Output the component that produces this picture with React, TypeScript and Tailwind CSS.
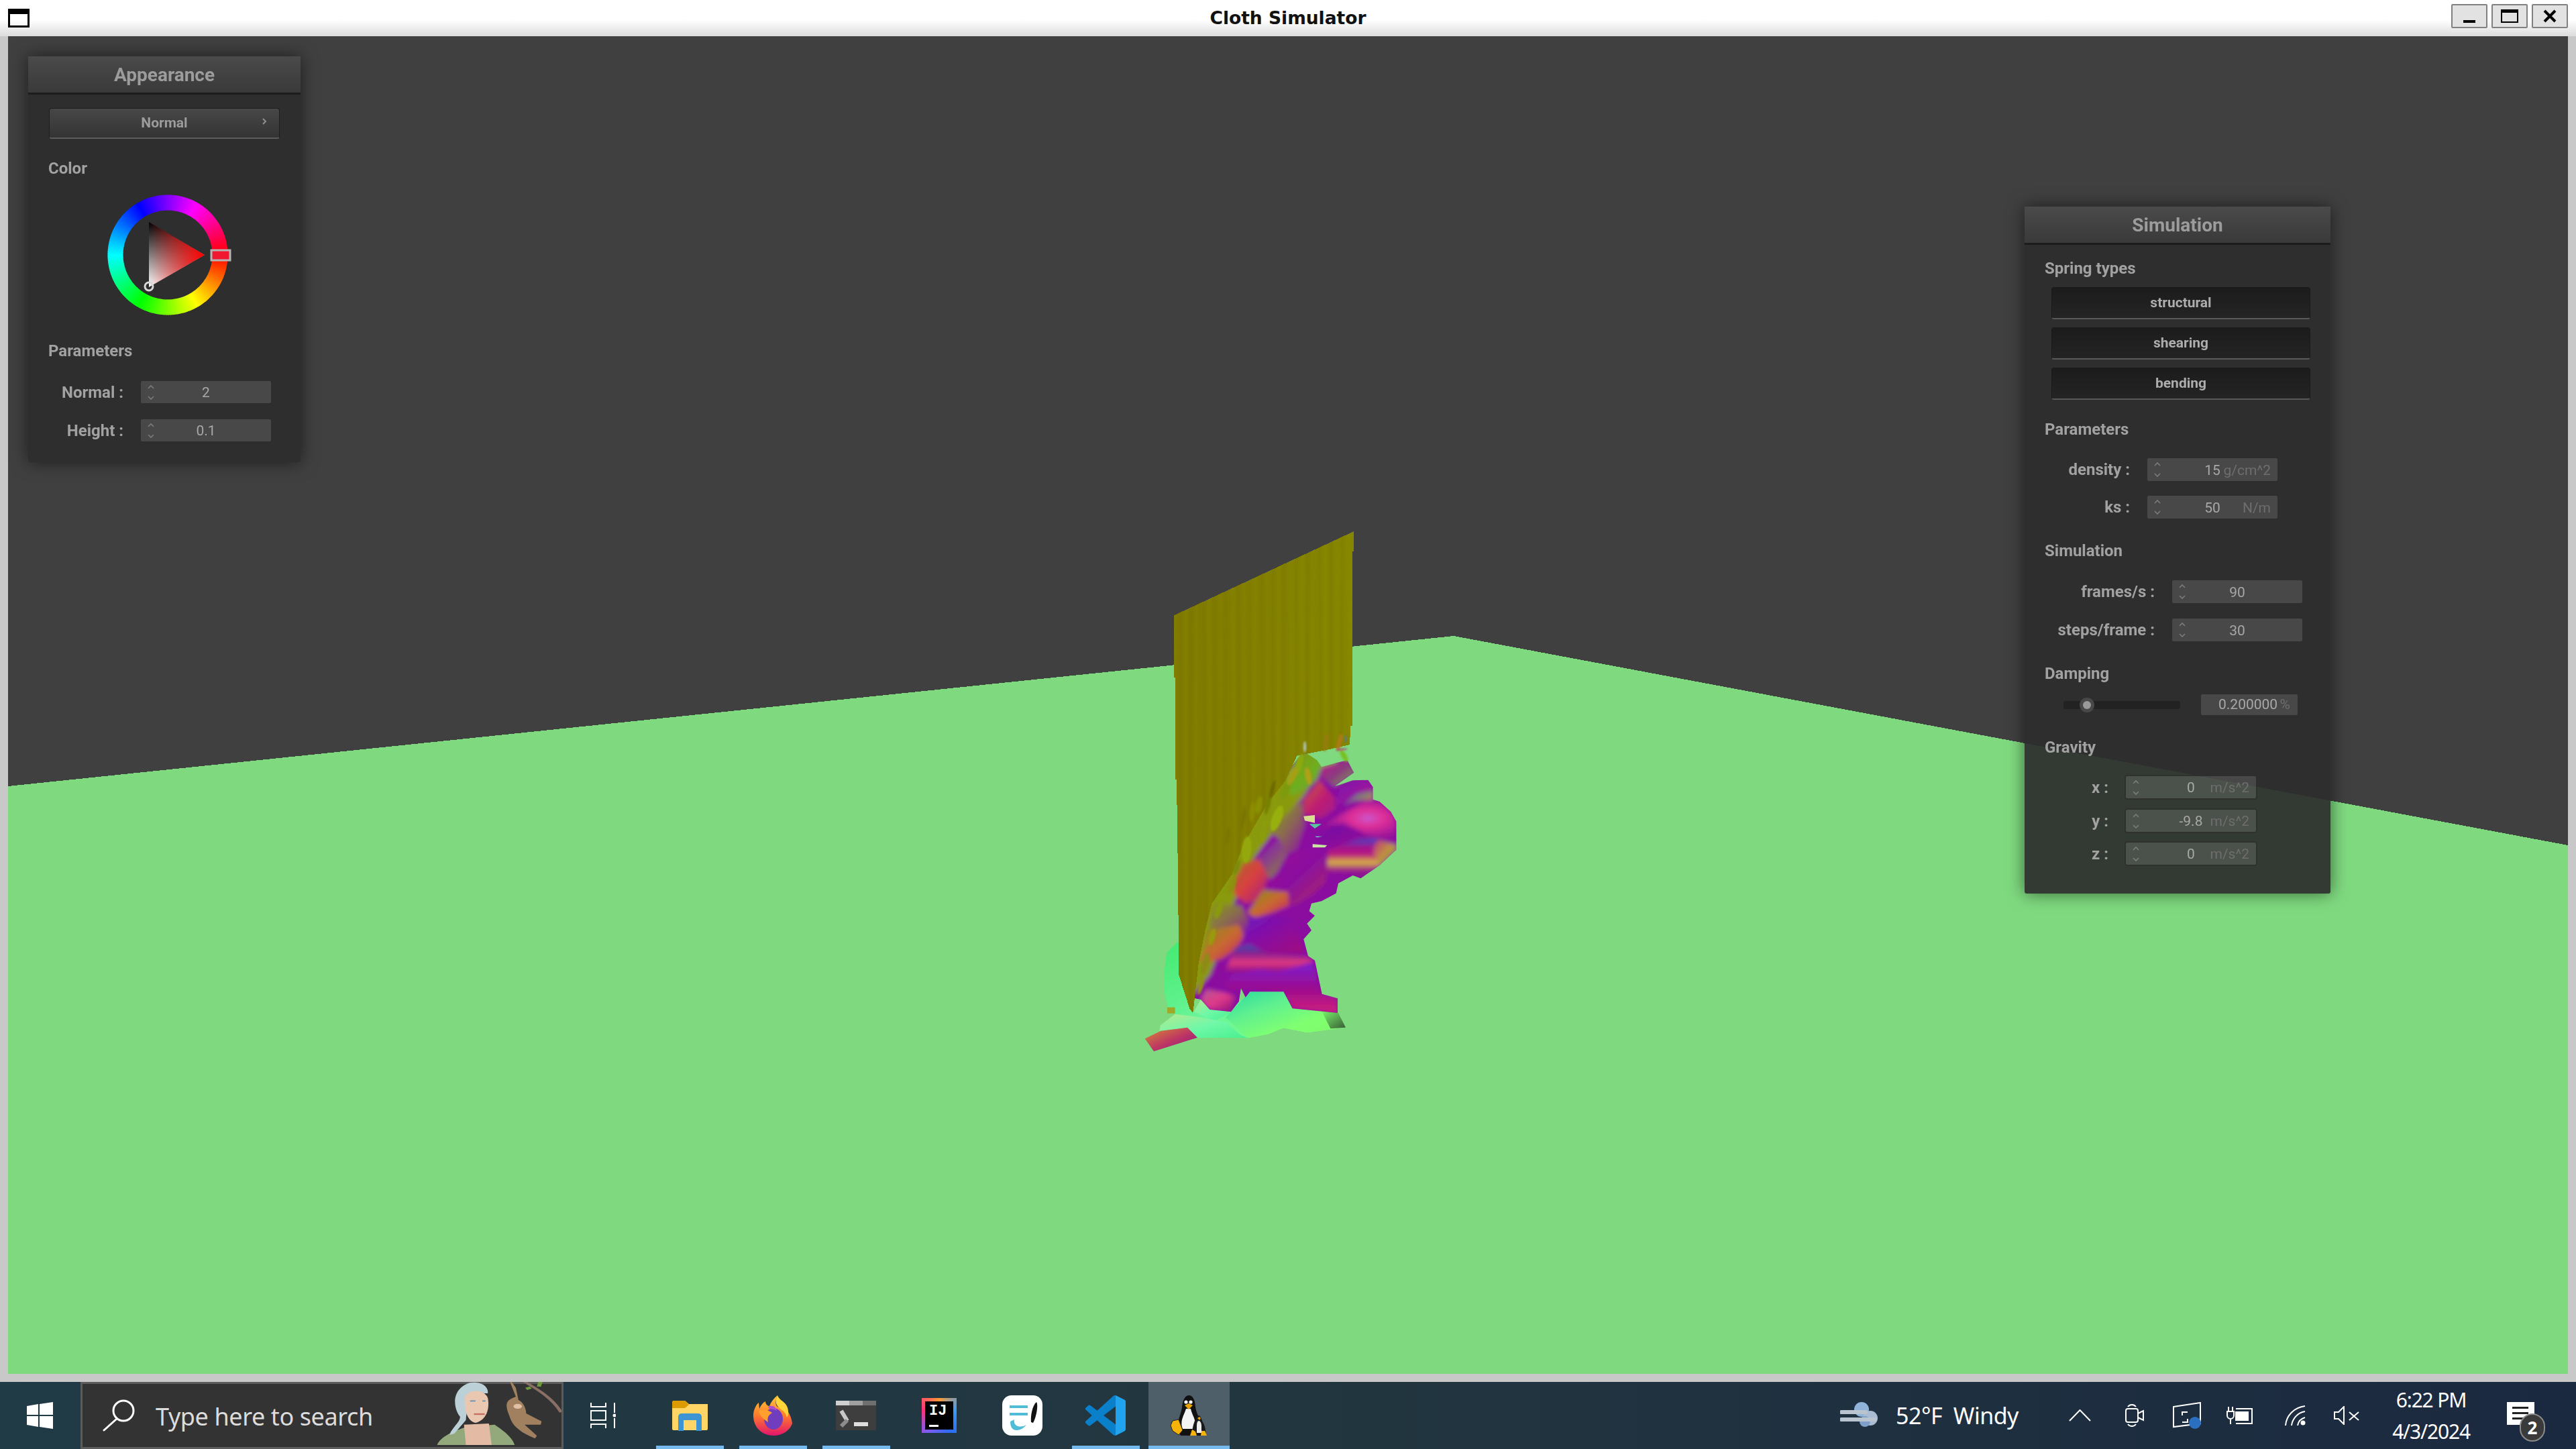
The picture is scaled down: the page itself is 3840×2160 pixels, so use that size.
const segs = Array.from({ length: 180 }, (_, i) => i * 2)
const wallStripes = Array.from({ length: 31 }, (_, i) => i)

const patchGrads: Record<string, string[]> = {
  mintGreen: ['#3fe86a', '#6cf59a', '#7dff78'],
  skirt: ['#28d8a0', '#60f090', '#80ff70', '#7cf868'],
  mint: ['#b8e890', '#70f8a8', '#48f090'],
  darkEnd: ['#78f868', '#3a5a38'],
  tail: ['#d89030', '#c03a60', '#8c0c90'],
  orangeMag: ['#7f9018', '#c86a30', '#c8186f'],
  purpOlive: ['#7a28b8', '#8a3a90', '#8a8a30'],
  olivePurp: ['#88a010', '#8a6a50', '#8c10a8'],
  magenta: ['#a00c90', '#8a10a0', '#b02a60'],
  orangePink: ['#a86a28', '#d84040', '#a01a90'],
  blueBand: ['#3050b0', '#8a2090', '#e03a80', '#90108a'],
  lowerMag: ['#7c20d0', '#9a0c90', '#d0207c'],
  pinkBlock: ['#b05a98', '#e03a88', '#8c1080'],
  purple: ['#6c18c0', '#8a0ca0', '#a0107c'],
  deepPurple: ['#7008a8', '#a00c90'],
  stripes: ['#3848c8', '#a01890', '#b81880', '#d8b840', '#9a1890', '#80108c'],
  orangeOlive: ['#c03080', '#c09040', '#70a030'],
  violet: ['#7a10b0', '#b01890'],
  blueOrange: ['#3060c0', '#d89030'],
  redWedge: ['#c86830', '#c02070', '#a01890'],
  oliveGreen: ['#8a9010', '#6cb020', '#a07820'],
  magGreen: ['#c0188a', '#8a3a80', '#80c030'],
  streak: ['#a06a18', '#d08030', '#8aa028'],
}

const patches: [string, string][] = [
  ['1000,-30 1030,-80 1085,-10 1085,25 1040,35 1000,10', 'streak'],
  ['850,25 880,0 1000,0 1030,50 960,70 940,125 880,180 820,200 800,130', 'oliveGreen'],
  ['960,70 1030,50 1075,40 1110,95 1020,155 960,120', 'magGreen'],
  ['880,220 950,130 1020,210 1020,260 960,300 880,280', 'redWedge'],
  ['1020,250 1040,170 1100,130 1168,128 1190,160 1190,180 1100,190', 'violet'],
  ['1060,240 1120,190 1190,175 1190,215 1100,220', 'blueOrange'],
  ['730,340 810,275 870,225 885,330 850,440 800,460 770,390 740,370', 'olivePurp'],
  ['610,500 680,480 770,390 805,460 760,540 730,570 720,560', 'purpOlive'],
  ['560,590 610,500 680,480 720,560 690,670 620,680 570,640', 'orangePink'],
  ['800,490 850,450 985,430 990,520 975,590 920,640 840,690 800,680 820,640 710,640 725,570 805,545', 'magenta'],
  ['630,720 700,620 810,630 815,690 740,720 660,745', 'orangeMag'],
  ['465,790 460,760 480,680 600,690 635,760 610,830 450,830', 'olivePurp'],
  ['440,870 450,800 590,775 615,830 570,890 510,930 415,945', 'orangeMag'],
  ['620,800 640,740 815,745 860,820 880,900 720,905 640,865 600,850', 'purple'],
  ['530,985 570,880 640,865 720,905 900,920 925,940 770,985', 'blueBand'],
  ['520,1040 560,1000 680,975 760,985 920,945 945,1040 960,1085 1032,1105 1032,1170 830,1150 790,1075 640,1060 600,1060 560,1070', 'lowerMag'],
  ['420,1110 445,1065 530,1080 570,1095 555,1165 460,1155', 'pinkBlock'],
  ['960,340 1000,310 1150,225 1220,225 1270,270 1295,320 1280,390 1170,375 1060,320', 'redWedge'],
  ['930,390 1020,330 1170,375 1285,395 1120,395 990,430', 'deepPurple'],
  ['990,440 1120,395 1200,390 1295,415 1295,440 1220,510 1135,568 1100,550 985,540', 'stripes'],
  ['1195,420 1215,395 1295,420 1295,440 1222,510 1195,460', 'orangeOlive'],
]

// creases where the flat part of the cloth starts to crumple: u, v, rx, ry, rotation, colour
const wrinkles: [number, number, number, number, number, string][] = [
  [625, 440, 22, 60, 5, '#94a808'],
  [650, 270, 12, 45, 5, '#8c8c00'],
  [700, 360, 14, 50, 10, '#8a9c08'],
  [760, 300, 22, 60, 20, '#98b010'],
  [800, 170, 16, 50, 20, '#7e9a10'],
  [860, 60, 14, 50, 15, '#8caa10'],
  [830, 110, 16, 45, 25, '#a4a018'],
  [900, 110, 14, 40, -10, '#b0a018'],
  [560, 600, 14, 40, 20, '#8c9010'],
  [500, 710, 14, 40, 20, '#8a9a10'],
  [470, 830, 14, 40, 15, '#9a9a10'],
  [440, 950, 15, 50, 15, '#8c8c18'],
  [420, 1050, 10, 40, 15, '#909018'],
  [580, 520, 12, 35, 20, '#7e8a08'],
  [680, 240, 14, 40, 10, '#8b9000'],
  [720, 240, 10, 45, 15, '#768000'],
  [740, 170, 8, 40, 15, '#6c6800'],
  [610, 300, 8, 50, 10, '#787400'],
  [540, 380, 8, 40, 10, '#7a7600'],
  [1040, -40, 10, 40, 15, '#b07818'],
  [980, -40, 10, 40, 10, '#947c10'],
  [1060, 20, 12, 30, -30, '#78c020'],
  [885, -20, 6, 25, 0, '#b0c8c0'],
  [1068, -55, 4, 16, 0, '#5078a0'],
  [1050, -8, 26, 4, -5, '#b83078'],
]

const massPoints =
  '600,1060 620,1100 640,1075 790,1075 830,1150 1032,1170 1032,1105 962,1085 930,935 900,915 880,840 915,800 895,770 930,735 905,715 915,680 960,670 1025,635 1035,590 1100,555 1135,568 1220,510 1295,440 1295,315 1270,270 1220,225 1190,215 1190,160 1168,128 1100,130 1040,150 1020,155 1105,95 1075,40 1030,50 960,70 940,40 880,0 800,100 700,200 560,400 470,600 400,800 370,1100 420,1110 460,1155 555,1165 590,1120'

const wallPoints =
  '300,-608 1103,-983 1103,-895 1098,-895 1098,-115 1090,-115 1086,-30 1000,-10 850,20 800,130 720,230 610,420 560,550 470,680 440,800 410,950 385,1170 370,1150 322,1000 318,560 312,125 306,125 306,-330 300,-330'

const Scene = () => (
  <svg className="absolute inset-0 h-full w-full" viewBox="12 54 3816 1994" preserveAspectRatio="none">
    <defs>
      {Object.entries(patchGrads).map(([id, stops]) => (
        <linearGradient key={id} id={id} x1="0" y1="0" x2={id === 'blueBand' || id === 'stripes' || id === 'lowerMag' ? '0' : '1'} y2="1">
          {stops.map((c, i) => (
            <stop key={i} offset={i / (stops.length - 1)} stopColor={c} />
          ))}
        </linearGradient>
      ))}
      <linearGradient id="wall" x1="0" y1="0" x2="1" y2="0">
        <stop offset="0" stopColor="#7f7a00" />
        <stop offset="0.5" stopColor="#827f00" />
        <stop offset="1" stopColor="#868600" />
      </linearGradient>
      <radialGradient id="blob" cx="0.62" cy="0.45" r="0.6">
        <stop offset="0" stopColor="#c858d0" />
        <stop offset="0.35" stopColor="#e03098" />
        <stop offset="1" stopColor="#90109a" />
      </radialGradient>
      <clipPath id="massClip">
        <polygon points={massPoints} />
      </clipPath>
      <clipPath id="wallClip">
        <polygon points={wallPoints} />
      </clipPath>
      <filter id="soft" x="-5%" y="-5%" width="110%" height="110%">
        <feGaussianBlur stdDeviation="9" />
      </filter>
      <filter id="softer" x="-40%" y="-40%" width="180%" height="180%">
        <feGaussianBlur stdDeviation="5" />
      </filter>
      <filter id="streaks" x="-5%" y="-5%" width="110%" height="110%">
        <feGaussianBlur stdDeviation="4" />
      </filter>
    </defs>
    <polygon points="12,1172 2167,948 3828,1260 3828,2048 12,2048" fill="#7fda7f" shapeRendering="crispEdges" />
    <g transform="translate(1650 1120) scale(0.33333)">
      <polygon
        points="318,850 268,900 255,1000 258,1080 272,1140 305,1175 305,1205 240,1225 235,1250 170,1285 210,1342 405,1280 630,1282 720,1265 790,1237 895,1258 1068,1235 1035,1170 830,1150 790,1078 640,1075 540,1170 420,1110 390,1160"
        fill="url(#mintGreen)"
        shapeRendering="crispEdges"
      />
      <polygon points="270,1145 305,1145 305,1172 270,1172" fill="#a0a828" />
      <polygon points="420,1110 390,1165 480,1205 550,1170" fill="url(#mint)" />
      <polygon points="305,1175 420,1190 530,1210 600,1270 630,1282 405,1280 235,1250 240,1225" fill="url(#mint)" />
      <polygon points="640,1075 790,1075 830,1150 1035,1170 1068,1235 895,1258 790,1237 720,1265 630,1282 530,1190 620,1095" fill="url(#skirt)" />
      <polygon points="960,1160 1035,1170 1068,1235 1000,1240" fill="url(#darkEnd)" />
      <polygon points="170,1285 240,1250 360,1235 405,1280 210,1342" fill="url(#tail)" />
      <g clipPath="url(#massClip)">
        <g filter="url(#soft)">
          <polygon points="350,0 1350,0 1350,1200 350,1200" fill="#8a0ca0" />
          <polygon points="880,0 800,100 700,200 560,400 470,600 400,800 370,1100 460,1000 520,850 560,700 640,500 760,340 880,200 960,70" fill="#8a9a10" />
          {patches.map(([p, g], i) => (
            <polygon key={i} points={p} fill={`url(#${g})`} />
          ))}
          <polygon points="960,340 1000,310 1150,225 1220,225 1270,270 1295,320 1280,390 1170,375 1060,320" fill="url(#blob)" />
        </g>
      </g>
      <polygon points="880,290 930,285 930,320 885,310" fill="#d8e090" />
      <polygon points="905,325 960,325 930,345" fill="#58c8a0" />
      <polygon points="930,380 965,380 940,385" fill="#70e8d0" />
      <polygon points="920,415 985,420 975,430 920,430" fill="#c8e8a0" />
      <polygon points={wallPoints} fill="url(#wall)" shapeRendering="crispEdges" />
      <g clipPath="url(#wallClip)">
        <g filter="url(#streaks)">
          {wallStripes.map((i) => (
            <path
              key={i}
              d={`M${300 + i * 26} -1000L${318 + i * 26 - (i % 5) * 8} 1200`}
              stroke={i % 2 === 0 ? '#8c8a00' : '#767100'}
              strokeOpacity="0.3"
              strokeWidth={7 + (i % 4) * 3}
            />
          ))}
        </g>
      </g>
      <g filter="url(#softer)">
        {wrinkles.map(([u, v, rx, ry, rot, c], i) => (
          <ellipse key={i} cx={u} cy={v} rx={rx} ry={ry} fill={c} transform={`rotate(${rot} ${u} ${v})`} />
        ))}
      </g>
    </g>
  </svg>
)

const Spin = () => (
  <svg className="absolute left-[8px] top-1/2 -translate-y-1/2" width="14" height="26" viewBox="0 0 14 26" fill="none" stroke="#7c7c7c" strokeWidth="1.6">
    <path d="M3 7l4-4 4 4" />
    <path d="M3 19l4 4 4-4" />
  </svg>
)

const NumBox = ({ value, unit, h = 'h-[37px]' }: { value: string; unit?: string; h?: string }) => (
  <div className={`relative flex w-[198px] items-center justify-center rounded-[4px] border-2 border-[#232323]/70 bg-[#b0b0b0]/20 pt-[3px] text-[21px] font-normal text-[#a8a8a8] ${h}`}>
    <Spin />
    <span>{value}</span>
    {unit && <span className="absolute right-[10px] text-[#6e6e6e]">{unit}</span>}
  </div>
)

const Row = ({ label, labelW, value, unit, mt, h }: { label: string; labelW: string; value: string; unit?: string; mt: string; h?: string }) => (
  <div className={`flex items-center gap-[24px] ${mt}`}>
    <span className={`text-right ${labelW}`}>{label}</span>
    <NumBox value={value} unit={unit} h={h} />
  </div>
)

const SectionLabel = ({ children, mt }: { children: string; mt: string }) => (
  <div className={`h-[30px] pl-[30px] leading-[30px] ${mt}`}>{children}</div>
)

const Panel = ({ title, pos, children }: { title: string; pos: string; children: React.ReactNode }) => (
  <div className={`absolute rounded-[3px] bg-[#2d2d2d]/[0.93] font-['Roboto',sans-serif] text-[24px] font-bold text-[#a2a2a2] shadow-[0_0_26px_rgba(0,0,0,0.55)] blur-[0.5px] ${pos}`}>
    <div className="flex h-[57px] items-center justify-center border-b-[3px] border-[#1c1c1c] bg-gradient-to-b from-[#4a4a4a] to-[#3a3a3a] pt-[2px] text-[28px] text-[#9c9c9c]">
      {title}
    </div>
    {children}
  </div>
)

const SpringBtn = ({ label, mt }: { label: string; mt: string }) => (
  <div className={`ml-[40px] flex h-[48px] w-[386px] items-center justify-center rounded-[4px] border border-b-2 border-[#1a1a1a] border-b-[#5a5a5a] bg-gradient-to-b from-[#1c1c1c] to-[#242424] text-[21px] text-[#adadad] ${mt}`}>
    {label}
  </div>
)

const Wheel = () => (
  <svg className="ml-[113px] mt-[19px] block" width="190" height="190" viewBox="155 285 190 190">
    <defs>
      <linearGradient id="triV" x1="0" y1="0" x2="0" y2="1">
        <stop offset="0" stopColor="#000" />
        <stop offset="1" stopColor="#fff" />
      </linearGradient>
      <linearGradient id="triH" x1="0" y1="0" x2="1" y2="0">
        <stop offset="0" stopColor="#f00" stopOpacity="0" />
        <stop offset="1" stopColor="#f00" />
      </linearGradient>
    </defs>
    {segs.map((a) => {
      const r = 78
      const s = ((a - 1.4) * Math.PI) / 180
      const e = ((a + 1.4) * Math.PI) / 180
      return (
        <path
          key={a}
          d={`M${250 + r * Math.cos(s)} ${380 + r * Math.sin(s)}A${r} ${r} 0 0 1 ${250 + r * Math.cos(e)} ${380 + r * Math.sin(e)}`}
          stroke={`hsl(${a} 100% 50%)`}
          strokeWidth="23"
          fill="none"
        />
      )
    })}
    <polygon points="222,331 305,380 222,428" fill="url(#triV)" />
    <polygon points="222,331 305,380 222,428" fill="url(#triH)" />
    <circle cx="222" cy="427" r="6" fill="none" stroke="#d8d8d8" strokeWidth="3" />
    <rect x="315" y="373" width="28" height="15" fill="#f01830" stroke="#b4b4b4" strokeWidth="3" />
  </svg>
)

const Appearance = () => (
  <Panel title="Appearance" pos="left-[30px] top-[30px] h-[605px] w-[406px]">
    <div className="relative ml-[31px] mt-[20px] flex h-[46px] w-[344px] items-center justify-center rounded-[4px] border border-b-2 border-[#1e1e1e] border-b-[#5c5c5c] bg-gradient-to-b from-[#474747] to-[#343434] text-[21px] text-[#9c9c9c]">
      Normal
      <svg className="absolute right-[18px] top-[14px]" width="7" height="10" viewBox="0 0 7 10" fill="none" stroke="#909090" strokeWidth="2">
        <path d="M1 1l4 4-4 4" />
      </svg>
    </div>
    <SectionLabel mt="mt-[29px]">Color</SectionLabel>
    <Wheel />
    <SectionLabel mt="mt-[33px]">Parameters</SectionLabel>
    <Row label="Normal :" labelW="w-[142px]" value="2" mt="mt-[28px]" />
    <Row label="Height :" labelW="w-[142px]" value="0.1" mt="mt-[20px]" />
  </Panel>
)

const Simulation = () => (
  <Panel title="Simulation" pos="left-[3006px] top-[254px] h-[1024px] w-[456px]">
    <SectionLabel mt="mt-[20px]">Spring types</SectionLabel>
    <SpringBtn label="structural" mt="mt-[13px]" />
    <SpringBtn label="shearing" mt="mt-[12px]" />
    <SpringBtn label="bending" mt="mt-[12px]" />
    <SectionLabel mt="mt-[29px]">Parameters</SectionLabel>
    <Row label="density :" labelW="w-[157px]" value="15" unit="g/cm^2" mt="mt-[26px]" h="h-[38px]" />
    <Row label="ks :" labelW="w-[157px]" value="50" unit="N/m" mt="mt-[18px]" h="h-[38px]" />
    <SectionLabel mt="mt-[31px]">Simulation</SectionLabel>
    <Row label="frames/s :" labelW="w-[194px]" value="90" mt="mt-[27px]" h="h-[38px]" />
    <Row label="steps/frame :" labelW="w-[194px]" value="30" mt="mt-[19px]" h="h-[38px]" />
    <SectionLabel mt="mt-[31px]">Damping</SectionLabel>
    <div className="ml-[58px] mt-[14px] flex items-center">
      <div className="relative h-[12px] w-[174px] rounded-[3px] bg-[#222222]">
        <div className="absolute left-[24px] top-[-5px] flex h-[22px] w-[22px] items-center justify-center rounded-full bg-[#484848]">
          <div className="h-[12px] w-[12px] rounded-full bg-[#9a9a9a]" />
        </div>
      </div>
      <div className="relative ml-[29px] flex h-[35px] w-[148px] items-center rounded-[4px] border-2 border-[#232323]/70 bg-[#b0b0b0]/20 pl-[26px] text-[21px] font-normal text-[#a8a8a8]">
        0.200000
        <span className="absolute right-[11px] text-[#6e6e6e]">%</span>
      </div>
    </div>
    <SectionLabel mt="mt-[31px]">Gravity</SectionLabel>
    <Row label="x :" labelW="w-[125px]" value="0" unit="m/s^2" mt="mt-[26px]" />
    <Row label="y :" labelW="w-[125px]" value="-9.8" unit="m/s^2" mt="mt-[13px]" />
    <Row label="z :" labelW="w-[125px]" value="0" unit="m/s^2" mt="mt-[12px]" />
  </Panel>
)

const TitleBar = () => (
  <div className="grid h-[54px] grid-cols-[1fr_auto_1fr] items-center bg-[linear-gradient(#ffffff_55%,#dcdcdc)]">
    <div className="ml-[12px] h-[28px] w-[32px] border-[3px] border-t-[8px] border-black" />
    <div className="font-['DejaVu_Sans',sans-serif] text-[26.5px] font-bold text-[#111111]">Cloth Simulator</div>
    <div className="mr-[12px] flex justify-end gap-[6px] pb-[8px] pt-[2px]">
      <div className="flex h-[36px] w-[54px] items-end justify-center rounded-[2px] border-2 border-[#808080] bg-[#e2e2e2] pb-[6px]">
        <div className="h-[4px] w-[18px] bg-black" />
      </div>
      <div className="flex h-[36px] w-[54px] items-center justify-center rounded-[2px] border-2 border-[#808080] bg-[#e2e2e2]">
        <div className="h-[20px] w-[26px] border-2 border-t-[5px] border-black" />
      </div>
      <div className="flex h-[36px] w-[54px] items-center justify-center rounded-[2px] border-2 border-[#808080] bg-[#e2e2e2]">
        <svg width="20" height="20" viewBox="0 0 20 20" stroke="#000" strokeWidth="4">
          <path d="M2 2l16 16M18 2L2 18" />
        </svg>
      </div>
    </div>
  </div>
)

const WinLogo = () => (
  <svg width="39" height="40" viewBox="0 0 39 40" fill="#fff">
    <polygon points="0,6 17,3 17,19 0,19" />
    <polygon points="19,3 39,0 39,19 19,19" />
    <polygon points="0,21 17,21 17,37 0,34" />
    <polygon points="19,21 39,21 39,40 19,37" />
  </svg>
)

const Goodall = () => (
  <svg className="h-[94px] w-[186px]" viewBox="1139 99 325 282" preserveAspectRatio="none">
    <path d="M1360 90 C1400 130 1440 170 1463 235" stroke="#8a6f66" strokeWidth="9" fill="none" />
    <path d="M1405 120 l5 -25 M1372 130 l12 -6" stroke="#6f9a3c" strokeWidth="11" />
    <path d="M1330 100 L1345 165 C1320 180 1315 195 1328 250 C1335 290 1350 320 1395 352 L1400 340 L1368 290 L1410 290 L1412 275 L1372 240 C1372 220 1365 190 1352 180 L1345 125 L1335 100Z" fill="#a1805f" />
    <circle cx="1350" cy="208" r="11" fill="#e0bfa5" />
    <path d="M1140 381 C1150 340 1185 320 1215 300 L1290 290 C1315 320 1335 345 1342 381Z" fill="#93a97c" />
    <path d="M1215 381 L1210 290 L1275 285 L1282 381Z" fill="#e3bba5" />
    <path d="M1172 336 C1180 300 1200 280 1200 255 C1180 210 1178 130 1225 103 C1250 95 1275 115 1272 150 L1262 150 C1240 130 1220 170 1215 270 L1185 330Z" fill="#bcd0d8" />
    <path d="M1212 165 C1225 130 1262 130 1272 170 C1278 220 1268 270 1240 282 C1222 275 1210 240 1212 165Z" fill="#e9c7b1" />
    <path d="M1226 184h14M1258 184h8" stroke="#5b92b8" strokeWidth="5" />
    <path d="M1236 243h28" stroke="#c86f65" strokeWidth="7" />
  </svg>
)

const TaskView = () => (
  <svg width="38" height="38" viewBox="0 0 38 38" fill="none" stroke="#fff" strokeWidth="2">
    <path d="M1 0v6h22V0M1 38v-6h22v6" />
    <rect x="1" y="12" width="22" height="14" />
    <path d="M36 0v15M36 23v15" />
    <circle cx="36" cy="19" r="2.5" fill="#fff" stroke="none" />
  </svg>
)

const Explorer = () => (
  <svg width="53" height="45" viewBox="0 0 53 45">
    <path d="M0 3a3 3 0 0 1 3-3h16l6 5h28v37a2 2 0 0 1-2 2H2a2 2 0 0 1-2-2Z" fill="#ffd566" />
    <path d="M0 3a3 3 0 0 1 3-3h16l6 6-6 5H0Z" fill="#dc9b00" />
    <path d="M9 45V24a5 5 0 0 1 5-5h25a5 5 0 0 1 5 5v21h-8V29H17v16Z" fill="#3c94d2" />
  </svg>
)

const Firefox = () => (
  <svg width="59" height="60" viewBox="0 0 59 60">
    <defs>
      <linearGradient id="ff" x1="0.5" y1="0" x2="0.5" y2="1">
        <stop offset="0" stopColor="#ffc83a" />
        <stop offset="0.5" stopColor="#ff7a2a" />
        <stop offset="1" stopColor="#e2146e" />
      </linearGradient>
    </defs>
    <path d="M36 0c-3 8-4 13 0 17 7 3 12 0 14 5 4 5 7 12 8 20-4 11-15 18-28 18C13 60 0 48 0 30 0 22 4 14 8 11l1 9c2-5 5-9 9-11 0 4 3 7 6 7 2-6 6-11 12-16Z" fill="url(#ff)" />
    <path d="M36 0c-4 8-3 14 3 19 6 5 9 6 11 14 3-5 3-14-2-20-4-5-10-7-12-13Z" fill="#ffd53a" />
    <ellipse cx="30" cy="35" rx="14" ry="16" fill="#6f3dbe" />
    <path d="M22 17c6-3 12 0 13 6-6-3-12-2-13-6Z" fill="#ac4fd0" />
    <path d="M8 23c7-3 15-1 20 3-5 3-8 7-6 14-6-4-13-9-14-17Z" fill="#ffa02e" />
  </svg>
)

const Terminal = () => (
  <svg width="60" height="44" viewBox="0 0 60 44">
    <rect width="60" height="44" rx="2" fill="#3e3e3e" />
    <rect width="20" height="7" fill="#cfcfcf" />
    <rect x="20" width="20" height="7" fill="#a0a0a0" />
    <rect x="40" width="20" height="7" fill="#6f6f6f" />
    <path d="M8 15l9 15" stroke="#c8c8c8" strokeWidth="6" />
    <path d="M17 29L8 38" stroke="#8c8c8c" strokeWidth="6" />
    <rect x="27" y="32" width="21" height="6" fill="#dedede" />
  </svg>
)

const IntelliJ = () => (
  <div className="flex h-[52px] w-[52px] items-center justify-center bg-[conic-gradient(#ff9a30,#3c9cf8,#2b6cf2,#7c5cf0,#ff3180,#ff9a30)] p-[5px]">
    <div className="flex h-full w-full flex-col bg-black px-[6px] pt-[3px] font-['Liberation_Mono',monospace] text-[22px] font-bold leading-[24px] text-white">
      IJ
      <div className="mt-[8px] h-[3px] w-[14px] bg-white" />
    </div>
  </div>
)

const WhiteApp = () => (
  <svg width="60" height="60" viewBox="0 0 60 60">
    <rect width="60" height="60" rx="14" fill="#fff" />
    <path d="M11 17h27M11 28h27" stroke="#4fbcd8" strokeWidth="4" />
    <path d="M12 39c0 8 3 13 9 13 6 0 11-3 15-8-5 3-9 3-13 2-4-2-6-5-5-10" fill="#4fbcd8" />
    <path d="M43 40c-1-10 2-25 8-30 3 4 0 22-5 31Z" fill="#111" />
  </svg>
)

const VsCode = () => (
  <svg width="60" height="60" viewBox="0 0 100 100">
    <path
      d="M96.46 10.8 75.86.87a6.23 6.23 0 0 0-7.11 1.21L29.37 38.04 12.2 25.02a4.16 4.16 0 0 0-5.32.24l-5.51 5a4.17 4.17 0 0 0 0 6.16L16.26 50 1.37 63.58a4.17 4.17 0 0 0 0 6.16l5.51 5a4.16 4.16 0 0 0 5.32.24l17.17-13.02 39.38 35.96a6.22 6.22 0 0 0 7.11 1.21l20.6-9.93A6.25 6.25 0 0 0 100 83.6V16.4a6.25 6.25 0 0 0-3.54-5.6ZM75 72.7 45.12 50 75 27.3Z"
      fill="#0a7fca"
    />
    <path d="M75 0 96.5 10.8A6.25 6.25 0 0 1 100 16.4v67.2a6.25 6.25 0 0 1-3.54 5.6L75 100Z" fill="#22a3ee" />
  </svg>
)

const Tux = () => (
  <svg width="56" height="60" viewBox="0 0 56 60">
    <path d="M16 60C6 45 16 32 18 18 19 5 24 0 28 0c6 0 9 6 10 17 1 12 12 24 10 43Z" fill="#111" />
    <path d="M19 50C14 38 22 28 24 20h7c2 10 10 20 7 30Z" fill="#f4f4f4" />
    <circle cx="24" cy="10" r="2.6" fill="#fff" />
    <circle cx="31" cy="10" r="2.6" fill="#fff" />
    <path d="M22 15l6-3 6 3-6 6Z" fill="#e8a400" />
    <path d="M4 38l9-2 6 16-6 7-9-6-3-8Z" fill="#f6b30a" stroke="#222" strokeWidth="1" />
    <path d="M37 38c2-5 4-8 6-8s4 4 5 8c3 5 6 12 5 20H33c0-8 2-15 4-20Z" fill="#1a1a1a" />
    <path d="M40 46c0-5 1-8 3-8s4 3 4 8v10h-7Z" fill="#efefef" />
    <path d="M41 34l3-2 2 2-2 3Z" fill="#e8a400" />
    <path d="M30 60l3-9 5 3 2 6ZM46 60l1-7 5 0 3 7Z" fill="#f6b30a" />
  </svg>
)

const apps = [
  { icon: <Explorer />, open: true },
  { icon: <Firefox />, open: true },
  { icon: <Terminal />, open: true },
  { icon: <IntelliJ /> },
  { icon: <WhiteApp /> },
  { icon: <VsCode />, open: true },
  { icon: <Tux />, open: true, active: true },
]

const TaskButton = ({ icon, open, active }: { icon: React.ReactNode; open?: boolean; active?: boolean }) => (
  <div className="flex h-full w-[124px] justify-center">
    <div className={`relative flex h-full items-center justify-center ${active ? 'w-[121px] bg-[#4e5f69]' : 'w-[101px]'}`}>
      {icon}
      {open && <div className="absolute bottom-0 left-0 right-0 h-[5px] bg-[#76b9ed]" />}
    </div>
  </div>
)

const Tray = () => (
  <div className="flex h-full items-center font-['Noto_Sans',sans-serif] text-white">
    <svg width="58" height="40" viewBox="0 0 58 40">
      <circle cx="32" cy="11" r="11" fill="#8fb3d9" />
      <circle cx="45" cy="24" r="11" fill="#a9bcd4" />
      <circle cx="37" cy="29" r="8" fill="#7ea0c8" />
      <path d="M2 15h36M2 26h50" stroke="#b9c4d0" strokeWidth="6" strokeLinecap="round" />
    </svg>
    <span className="ml-[25px] w-[186px] whitespace-pre text-[34px] leading-none tracking-[-0.5px]">52°F  Windy</span>
    <svg className="ml-[72px]" width="33" height="18" viewBox="0 0 33 18" fill="none" stroke="#fff" strokeWidth="2">
      <path d="M1 17L16.5 1 32 17" />
    </svg>
    <svg className="ml-[51px]" width="29" height="36" viewBox="0 0 29 36" fill="none" stroke="#fff" strokeWidth="2">
      <path d="M4 5c3-4 9-4 12 0M4 31c3 4 9 4 12 0" />
      <rect x="1" y="8" width="18" height="20" rx="3" />
      <path d="M19 15l8-4v14l-8-4" />
    </svg>
    <svg className="ml-[42px]" width="42" height="40" viewBox="0 0 42 40" fill="none" stroke="#fff" strokeWidth="2">
      <path d="M1 7L41 1v31L1 37Z" />
      <path d="M14 20v-5h8M22 25v5h-8" />
      <circle cx="33" cy="31" r="9" fill="#2a6fc0" stroke="none" />
    </svg>
    <svg className="ml-[38px]" width="40" height="28" viewBox="0 0 40 28" fill="none" stroke="#fff" strokeWidth="2">
      <path d="M3 1v7M9 1v7M1 8h10v6a5 5 0 0 1-10 0ZM6 19v8" />
      <path d="M14 4h24v22H14" />
      <rect x="13" y="8" width="20" height="14" fill="#fff" stroke="none" />
    </svg>
    <svg className="ml-[47px]" width="31" height="30" viewBox="0 0 31 30" fill="none" stroke="#fff" strokeWidth="2">
      <path d="M1 30C2 16 13 3 30 1M10 30C11 21 18 11 30 9M19 30c1-6 4-10 11-12" />
      <circle cx="27" cy="26" r="3.5" fill="#fff" stroke="none" />
    </svg>
    <svg className="ml-[42px]" width="38" height="28" viewBox="0 0 38 28" fill="none" stroke="#fff" strokeWidth="2">
      <path d="M1 9h6l8-8v26l-8-8H1Z" />
      <path d="M23 9l14 12M37 9L23 21" />
    </svg>
    <div className="ml-[46px] flex w-[122px] flex-col items-center gap-[21px] text-[30px] leading-[26px] tracking-[-1.2px]">
      <span>6:22 PM</span>
      <span>4/3/2024</span>
    </div>
    <div className="relative mb-[6px] ml-[52px] h-[34px] w-[41px] bg-white">
      <div className="ml-[8px] mt-[7px] h-[3px] w-[24px] bg-[#222222]" />
      <div className="ml-[8px] mt-[5px] h-[3px] w-[24px] bg-[#222222]" />
      <div className="ml-[8px] mt-[5px] h-[3px] w-[24px] bg-[#222222]" />
      <div className="absolute left-[19px] top-[17px] flex h-[42px] w-[38px] items-center justify-center rounded-full border-2 border-[#8a8a8a] bg-[#3a3a3a] text-[26px] font-bold leading-none text-white">
        2
      </div>
    </div>
  </div>
)

const Taskbar = () => (
  <div className="flex h-[100px] bg-gradient-to-r from-[#203a46] via-[#22363f] to-[#1b2940]">
    <div className="flex w-[120px] items-center justify-center pr-[2px]">
      <WinLogo />
    </div>
    <div className="flex h-full w-[720px] items-center border-[3px] border-[#5c5c5c] bg-[#333333]">
      <svg className="ml-[30px]" width="48" height="48" viewBox="0 0 48 48" fill="none" stroke="#fff" strokeWidth="3">
        <circle cx="31" cy="17" r="15" />
        <path d="M21 29L2 46" strokeLinecap="round" />
      </svg>
      <span className="ml-[31px] mt-[4px] font-['Noto_Sans',sans-serif] text-[36px] leading-none tracking-[-0.4px] text-[#dcdcdc]">Type here to search</span>
      <div className="ml-auto mt-[-3px] self-start">
        <Goodall />
      </div>
    </div>
    <div className="flex w-[126px] items-center pl-[40px]">
      <TaskView />
    </div>
    {apps.map((a, i) => (
      <TaskButton key={i} {...a} />
    ))}
    <div className="ml-[909px]">
      <Tray />
    </div>
  </div>
)

export default function App() {
  return (
    <div className="flex h-[2160px] w-[3840px] flex-col overflow-hidden">
      <TitleBar />
      <div className="relative flex-1 border-x-[12px] border-b-[12px] border-[#c8c8c8] bg-[#404040]">
        <Scene />
        <Appearance />
        <Simulation />
      </div>
      <Taskbar />
    </div>
  )
}
